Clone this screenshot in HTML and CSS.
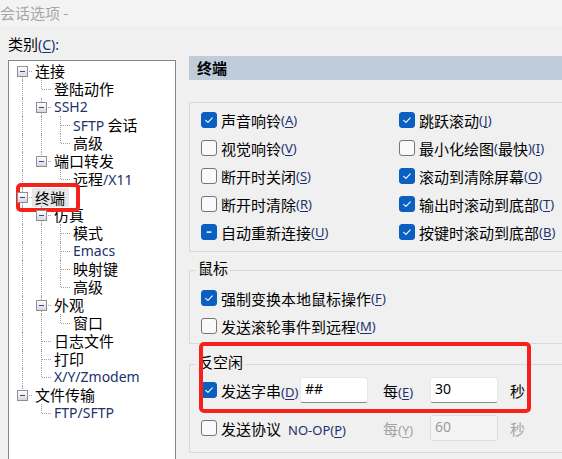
FILE: index.html
```html
<!DOCTYPE html>
<html lang="zh-CN">
<head>
<meta charset="utf-8">
<link rel="stylesheet" href="styles.css">
</head>
<body>
<div class="titlebar">会话选项 -</div>
<div class="main">
  <div class="left">
    <div class="cat">类别<span class="l">(<u>C</u>):</span></div>
    <div class="tree">
      <div class="row"><span class="c F"><i class="bx"></i></span><span class="t">连接</span></div>
      <div class="row"><span class="c I"></span><span class="c L"></span><span class="t">登陆动作</span></div>
      <div class="row"><span class="c I"></span><span class="c T"><i class="bx"></i></span><span class="t l">SSH2</span></div>
      <div class="row"><span class="c I"></span><span class="c I"></span><span class="c T"></span><span class="t"><span class="l">SFTP</span> 会话</span></div>
      <div class="row"><span class="c I"></span><span class="c I"></span><span class="c L"></span><span class="t">高级</span></div>
      <div class="row"><span class="c I"></span><span class="c L"><i class="bx"></i></span><span class="t">端口转发</span></div>
      <div class="row"><span class="c I"></span><span class="c"></span><span class="c L"></span><span class="t">远程<span class="l">/X11</span></span></div>
      <div class="row"><span class="c T"><i class="bx"></i></span><span class="t sel">终端</span></div>
      <div class="row"><span class="c I"></span><span class="c T"><i class="bx"></i></span><span class="t">仿真</span></div>
      <div class="row"><span class="c I"></span><span class="c I"></span><span class="c T"></span><span class="t">模式</span></div>
      <div class="row"><span class="c I"></span><span class="c I"></span><span class="c T"></span><span class="t l">Emacs</span></div>
      <div class="row"><span class="c I"></span><span class="c I"></span><span class="c T"></span><span class="t">映射键</span></div>
      <div class="row"><span class="c I"></span><span class="c I"></span><span class="c L"></span><span class="t">高级</span></div>
      <div class="row"><span class="c I"></span><span class="c T"><i class="bx"></i></span><span class="t">外观</span></div>
      <div class="row"><span class="c I"></span><span class="c I"></span><span class="c L"></span><span class="t">窗口</span></div>
      <div class="row"><span class="c I"></span><span class="c T"></span><span class="t">日志文件</span></div>
      <div class="row"><span class="c I"></span><span class="c T"></span><span class="t">打印</span></div>
      <div class="row"><span class="c I"></span><span class="c L"></span><span class="t l">X/Y/Zmodem</span></div>
      <div class="row"><span class="c L"><i class="bx"></i></span><span class="t">文件传输</span></div>
      <div class="row"><span class="c"></span><span class="c L"></span><span class="t l">FTP/SFTP</span></div>
    </div>
  </div>

  <div class="right">
    <div class="header">终端</div>

    <fieldset class="grp g1">
      <div class="grid2">
        <div class="ck"><span class="cb on"><svg viewBox="0 0 16 16"><path d="M4.2 8.3 L6.8 10.8 L11.8 5.6"/></svg></span>声音响铃<span class="m">(<u>A</u>)</span></div>
        <div class="ck"><span class="cb on"><svg viewBox="0 0 16 16"><path d="M4.2 8.3 L6.8 10.8 L11.8 5.6"/></svg></span>跳跃滚动<span class="m">(<u>J</u>)</span></div>
        <div class="ck"><span class="cb"></span>视觉响铃<span class="m">(<u>V</u>)</span></div>
        <div class="ck"><span class="cb"></span>最小化绘图<span class="m">(</span>最快<span class="m">)(<u>I</u>)</span></div>
        <div class="ck"><span class="cb"></span>断开时关闭<span class="m">(<u>S</u>)</span></div>
        <div class="ck"><span class="cb on"><svg viewBox="0 0 16 16"><path d="M4.2 8.3 L6.8 10.8 L11.8 5.6"/></svg></span>滚动到清除屏幕<span class="m">(<u>O</u>)</span></div>
        <div class="ck"><span class="cb"></span>断开时清除<span class="m">(<u>R</u>)</span></div>
        <div class="ck"><span class="cb on"><svg viewBox="0 0 16 16"><path d="M4.2 8.3 L6.8 10.8 L11.8 5.6"/></svg></span>输出时滚动到底部<span class="m">(<u>T</u>)</span></div>
        <div class="ck"><span class="cb on"><svg viewBox="0 0 16 16"><rect class="dash" x="5" y="7" width="6" height="2" rx="1"/></svg></span>自动重新连接<span class="m">(<u>U</u>)</span></div>
        <div class="ck"><span class="cb on"><svg viewBox="0 0 16 16"><path d="M4.2 8.3 L6.8 10.8 L11.8 5.6"/></svg></span>按键时滚动到底部<span class="m">(<u>B</u>)</span></div>
      </div>
    </fieldset>

    <fieldset class="grp g2">
      <legend>鼠标</legend>
      <div class="grid1">
        <div class="ck"><span class="cb on"><svg viewBox="0 0 16 16"><path d="M4.2 8.3 L6.8 10.8 L11.8 5.6"/></svg></span>强制变换本地鼠标操作<span class="m">(<u>F</u>)</span></div>
        <div class="ck"><span class="cb"></span>发送滚轮事件到远程<span class="m">(<u>M</u>)</span></div>
      </div>
    </fieldset>

    <fieldset class="grp g3">
      <legend>反空闲</legend>
      <div class="grid3">
        <span class="cb on"><svg viewBox="0 0 16 16"><path d="M4.2 8.3 L6.8 10.8 L11.8 5.6"/></svg></span>
        <span class="lbl">发送字串<span class="m">(<u>D</u>)</span></span>
        <span class="inp">##</span>
        <span class="per">每<span class="m">(<u>E</u>)</span></span>
        <span class="inp">30</span>
        <span class="sec">秒</span>

        <span class="cb"></span>
        <span class="lbl wide">发送协议<span class="m noop">NO-OP(<u>P</u>)</span></span>
        <span class="per dis">每<span class="m">(<u>Y</u>)</span></span>
        <span class="inp dis">60</span>
        <span class="sec dis">秒</span>
      </div>
    </fieldset>
  </div>
</div>
<div class="mark mark1"></div>
<div class="mark mark2"></div>
</body>
</html>
```

FILE: styles.css
```css
* { box-sizing: border-box; }
html, body { margin: 0; padding: 0; }
body {
  position: relative;
  width: 562px;
  height: 459px;
  overflow: hidden;
  background: #f0f0f0;
  font-family: "Noto Sans CJK SC", "Noto Sans", sans-serif;
  font-size: 15px;
  color: #000;
}
.titlebar {
  height: 26px;
  line-height: 25px;
  background: #f3f3f3;
  color: #a6a6a6;
  font-size: 15px;
}
.main {
  display: flex;
  gap: 13px;
  padding-left: 8px;
}
.left { width: 168px; flex-shrink: 0; }
.cat { margin-top: 8px; height: 20px; line-height: 20px; white-space: nowrap; }
.l {
  font-family: "Noto Sans", sans-serif;
  font-size: 14px;
  color: #22306e;
}
.m {
  font-family: "Noto Sans", sans-serif;
  font-size: 13px;
  color: #22306e;
}
u { text-decoration: underline; text-underline-offset: 2px; text-decoration-thickness: 1px; }

/* tree */
.tree {
  margin-top: 6px;
  height: 420px;
  background: #fff;
  border: 1px solid #828790;
  padding: 1px 0 0 4px;
}
.row { display: flex; height: 18px; align-items: center; }
.c {
  position: relative;
  width: 19px;
  height: 18px;
  flex-shrink: 0;
  display: flex;
  align-items: flex-start;
  padding-left: 4px;
}
.c.I::before, .c.T::before, .c.L::before, .c.F::before {
  content: "";
  position: absolute;
  left: 9px;
  top: 0;
  height: 18px;
  border-left: 1px dotted #a0a0a0;
}
.c.L::before { height: 9px; }
.c.F::before { top: 9px; height: 9px; }
.c.T::after, .c.L::after, .c.F::after {
  content: "";
  position: absolute;
  left: 10px;
  top: 9px;
  width: 9px;
  border-top: 1px dotted #a0a0a0;
}
.bx {
  position: relative;
  z-index: 1;
  margin-top: 4px;
  width: 11px;
  height: 11px;
  border: 1px solid #8f8f8f;
  background: linear-gradient(#ffffff, #d8d8d8);
  display: flex;
  align-items: center;
  justify-content: center;
}
.bx::before { content: ""; width: 5px; height: 1px; background: #2c4a9e; }
.t { padding-left: 3px; line-height: 18px; white-space: nowrap; }
.t.sel { background: #e6e6e6; padding: 0 4px 0 3px; height: 19px; line-height: 19px; }

/* right panel */
.right { width: 420px; flex-shrink: 0; }
.header {
  margin-top: 30px;
  height: 24px;
  line-height: 24px;
  background: #bfcddb;
  padding-left: 8px;
  font-weight: 700;
}
fieldset.grp {
  border: 1px solid #dadada;
  min-width: 0;
  margin-left: 0;
  margin-right: 0;
  margin-bottom: 0;
}
legend {
  padding: 0 2px 4px;
  margin-left: -5px;
  line-height: 20px;
}
fieldset.g1 { margin-top: 22px; padding: 3px 0 5px 11px; }
fieldset.g2 { margin-top: 6px; padding: 2px 0 3px 11px; }
fieldset.g3 { margin-top: 8px; padding: 0 0 10px 11px; }

.grid2 { display: grid; grid-template-columns: 198px auto; grid-auto-rows: 28px; }
.grid1 { display: grid; grid-auto-rows: 28px; }
.ck { display: flex; align-items: center; white-space: nowrap; }

.cb {
  width: 16px;
  height: 16px;
  border-radius: 3px;
  border: 1px solid #767676;
  background: #fafafa;
  margin-right: 4px;
  flex-shrink: 0;
  display: flex;
}
.cb.on { background: #0b5fc0; border-color: #0b5fc0; }
.cb svg { width: 14px; height: 14px; }
.cb path { fill: none; stroke: #fff; stroke-width: 1.2; stroke-linecap: round; stroke-linejoin: round; }
.cb .dash { fill: #dbe6f5; }

.grid3 {
  display: grid;
  grid-template-columns: 20px 79px 68px 62px 68px auto;
  grid-auto-rows: 28px;
  row-gap: 10px;
  align-items: center;
  white-space: nowrap;
}
.lbl.wide { grid-column: span 2; }
.noop { margin-left: 7px; }
.inp {
  height: 26px;
  background: #fff;
  border: 1px solid #e8e8e8;
  border-bottom-color: #8a8a8a;
  border-radius: 3px;
  padding-left: 4px;
  font-family: "Noto Sans", sans-serif;
  font-size: 14px;
  line-height: 22px;
}
.inp.dis { background: #f4f4f4; border-color: #dedede; color: #9a9a9a; }
.per { padding-left: 15px; }
.sec { padding-left: 12px; }
.dis, .dis .m { color: #a3a3a3; }

/* red annotation frames */
.mark {
  position: absolute;
  border: 4px solid #f5211b;
  border-radius: 5px;
}
.mark1 { left: 16px; top: 183px; width: 64px; height: 29px; }
.mark2 { left: 199px; top: 342px; width: 332px; height: 71px; }
```
